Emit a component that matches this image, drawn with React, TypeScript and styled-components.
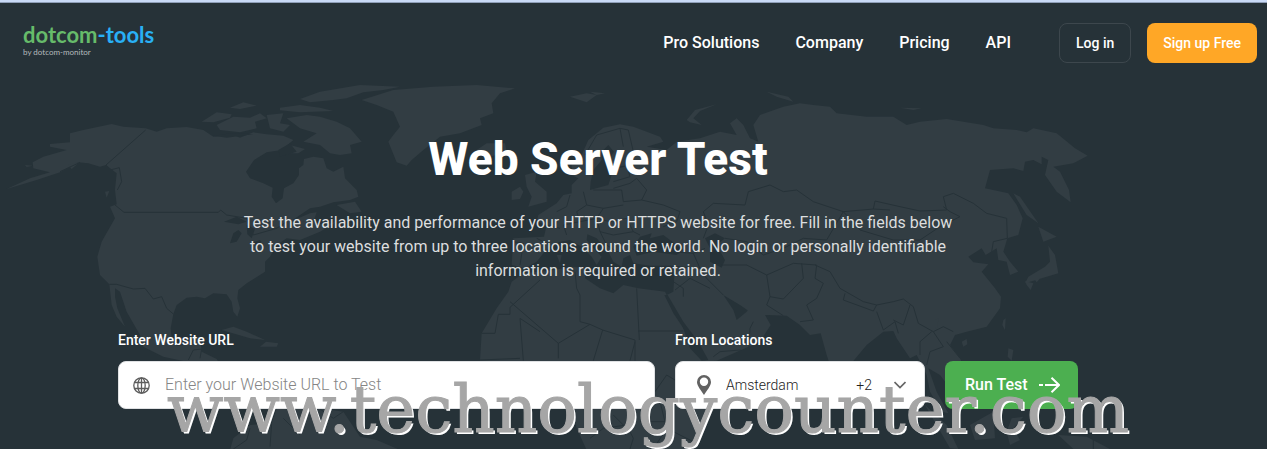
import React from "react";
import styled, { createGlobalStyle } from "styled-components";

const Global = createGlobalStyle`
  *, *::before, *::after { box-sizing: border-box; }
  body { margin: 0; background: #263238; font-family: Roboto, "Liberation Sans", sans-serif; color: #fff; }
`;

const Page = styled.div`
  position: relative;
  min-height: 100vh;
  overflow: hidden;
  background: #263238;
  border-top: 2px solid #c9daf6;
  box-shadow: inset 0 1px 0 #8f9fb8;
`;

const MapArt = styled.svg`
  position: absolute;
  top: -2px;
  left: 0;
  width: 1267px;
  height: 449px;
  fill: #323d43;
`;

const Header = styled.header`
  position: relative;
  display: flex;
  align-items: center;
  justify-content: space-between;
  padding: 21px 10px 0 23px;
`;

const Logo = styled.a`
  display: flex;
  flex-direction: column;
  margin-bottom: 4px;
  color: #66bb6a;
  text-decoration: none;
  font-family: Lato, sans-serif;
  font-size: 22px;
  font-weight: 700;
  line-height: 22px;
`;

const LogoAccent = styled.span`
  color: #29b0f5;
`;

const Tagline = styled.small`
  font-size: 8px;
  font-weight: 400;
  line-height: 12px;
  color: #b4babd;
`;

const Nav = styled.nav`
  display: flex;
  align-items: center;
  gap: 36px;
`;

const NavLink = styled.a`
  color: #fff;
  font-size: 16px;
  font-weight: 500;
  line-height: 24px;
  text-decoration: none;
`;

const Account = styled.div`
  display: flex;
  gap: 16px;
  margin-left: 12px;
`;

const AccountButton = styled.button<{ $filled?: boolean }>`
  height: 40px;
  padding: 0 16px;
  border: ${(p) => (p.$filled ? "0" : "1px solid #3d474d")};
  border-radius: 8px;
  background: ${(p) => (p.$filled ? "#ffa726" : "transparent")};
  color: #fff;
  font: 500 14px/20px Roboto, sans-serif;
  white-space: nowrap;
`;

const Hero = styled.main`
  position: relative;
  display: flex;
  flex-direction: column;
  align-items: center;
  padding: 68px 71px 40px 0;
`;

const Title = styled.h1`
  margin: 0;
  font-size: 46px;
  font-weight: 800;
  line-height: 56px;
`;

const Lead = styled.p`
  max-width: 720px;
  margin: 24px 0 47px;
  color: #dcdedf;
  font-size: 16px;
  font-weight: 400;
  line-height: 24px;
  text-align: center;
`;

const TestForm = styled.form`
  display: flex;
  align-items: flex-end;
  gap: 20px;
  width: 100%;
  max-width: 960px;
`;

const Field = styled.div<{ $width?: number }>`
  flex: ${(p) => (p.$width ? `0 0 ${p.$width}px` : "1 1 0")};
  min-width: 0;
`;

const Label = styled.label`
  display: block;
  margin-bottom: 11px;
  font-size: 14px;
  font-weight: 500;
  line-height: 20px;
`;

const Box = styled.div<{ $pad: number }>`
  display: flex;
  align-items: center;
  gap: 15px;
  height: 48px;
  padding: 0 18px 0 ${(p) => p.$pad}px;
  border: 1px solid #dfe1e3;
  border-radius: 8px;
  background: #fff;
  color: #333;
  font-size: 14px;
  font-weight: 300;
`;

const UrlInput = styled.input`
  flex: 1;
  min-width: 0;
  padding: 0;
  border: 0;
  outline: 0;
  background: transparent;
  font: 300 16px/24px Roboto, sans-serif;
  color: #333;
  &::placeholder { color: #858585; opacity: 1; }
`;

const Location = styled.select`
  flex: 1;
  min-width: 0;
  padding: 0;
  border: 0;
  appearance: none;
  background: transparent;
  color: #222;
  font: 300 14px/20px Roboto, sans-serif;
`;

const Extra = styled.span`
  color: #222;
  margin-right: 7px;
`;

const RunButton = styled.button`
  display: flex;
  align-items: center;
  justify-content: space-between;
  width: 133px;
  height: 48px;
  padding: 0 18px 0 20px;
  border: 0;
  border-radius: 8px;
  background: #4caf50;
  color: #fff;
  font: 500 16px/24px Roboto, sans-serif;
  white-space: nowrap;
`;

const Watermark = styled.div`
  position: absolute;
  top: 370px;
  left: 167px;
  color: #a6a6a6;
  font: 66px/76px "DejaVu Serif", serif;
  -webkit-text-stroke: 1px #a6a6a6;
  text-shadow: 2px 2px 0 #fff;
  white-space: nowrap;
  pointer-events: none;
`;

function WorldMap() {
  return (
    <MapArt viewBox="0 -225 3801 1347" aria-hidden="true">
      <path d="M210,175 250,165 335,147 370,155 437,160 470,170 500,160 560,156 610,165 640,185 700,180 720,188 760,172 800,178 850,182 880,195 845,225 800,232 762,255 738,290 750,310 790,325 818,338 815,365 828,385 848,370 852,340 880,325 897,300 897,280 910,270 912,252 940,245 970,250 980,280 1000,290 1030,275 1035,310 1070,345 1075,365 1050,375 1000,382 960,395 930,400 870,440 930,415 950,412 940,440 975,450 1010,440 960,470 900,495 860,490 830,510 810,545 795,560 795,590 740,625 715,645 712,670 720,700 712,725 700,710 695,680 680,658 640,655 615,670 590,665 560,668 530,690 520,717 512,760 515,790 530,812 560,810 570,790 600,785 605,830 650,852 660,870 560,860 490,845 430,815 420,780 380,710 360,650 345,640 345,665 352,700 375,755 350,725 335,690 328,628 300,600 292,545 305,500 345,430 330,395 350,388 345,345 350,295 318,270 300,275 265,265 235,262 180,292 110,315 20,342 90,310 150,292 100,280 98,262 130,245 200,225 150,215 150,207 210,202Z" />
      <path d="M605,140 650,112 695,118 690,128 640,142ZM650,150 700,125 750,128 780,115 800,130 765,140 770,160 720,172 660,165ZM690,98 730,82 770,92 720,102ZM800,120 850,115 840,145 870,150 850,170 810,160ZM840,98 900,90 960,98 1000,108 900,112 840,106ZM900,72 960,50 1080,30 1200,35 1150,45 1090,52 1040,70 1000,75 930,82ZM860,130 920,120 960,125 1010,140 1050,160 1085,200 1050,210 1055,235 1020,240 990,235 960,210 910,200 950,175 900,160ZM850,235 870,210 915,222 895,235ZM1010,390 1065,380 1085,410 1050,415ZM665,765 700,755 740,770 795,795 750,790ZM798,800 835,805 830,815 780,815ZM315,350 328,348 320,368ZM205,270 240,260 215,282ZM75,270 98,272 80,276ZM80,232 98,235Z" />
      <path d="M1085,75 1180,45 1300,35 1430,30 1545,40 1500,55 1475,85 1480,115 1440,130 1445,150 1380,175 1320,185 1270,225 1235,255 1220,272 1190,262 1165,200 1180,180 1200,155 1180,110 1130,90Z" />
      <path d="M830,1000 815,1045 750,1050 700,1090 690,1125 1200,1125 1130,1095 1080,1085 1030,1010 960,1000Z" />

      <g transform="translate(1200 0)">
        <path d="M340,490 335,570 375,580 410,560 430,535 450,515 480,500 510,495 545,515 575,545 590,570 605,545 580,520 560,495 562,478 590,490 625,530 640,560 665,575 670,550 690,540 700,565 750,572 825,572 820,650 800,660 830,720 880,800 910,860 950,857 1080,800 1112,750 1095,720 1065,705 1060,685 1040,710 1010,735 1000,705 970,660 1020,690 1060,718 1160,722 1200,750 1230,780 1262,775 1280,840 1300,900 1325,940 1350,870 1400,810 1450,770 1480,768 1490,790 1530,850 1550,840 1580,900 1590,950 1625,1010 1645,1015 1610,950 1585,880 1620,900 1650,940 1700,900 1680,850 1650,810 1665,780 1700,770 1760,755 1800,700 1803,665 1785,640 1745,590 1765,568 1720,562 1705,545 1745,520 1757,540 1790,520 1795,555 1820,560 1830,600 1855,590 1830,560 1810,530 1822,490 1855,480 1868,430 1850,390 1825,355 1755,340 1770,285 1840,280 1870,288 1875,260 1900,255 1925,268 1925,245 1945,255 1935,300 1970,350 2012,382 2007,345 1980,290 1960,275 2020,265 2063,242 2025,220 1970,175 1900,160 1880,172 1850,165 1780,160 1750,150 1640,132 1560,140 1520,150 1480,125 1400,125 1310,115 1290,95 1240,90 1200,85 1150,95 1080,120 1060,150 1075,200 1050,190 1030,150 1010,130 990,145 1010,180 960,170 900,190 830,200 800,225 740,215 790,200 780,185 700,155 660,148 610,158 565,195 545,240 515,260 515,300 535,310 515,330 515,355 490,360 470,385 415,420 410,440 440,450 432,485Z" />
        <path d="M370,595 440,588 520,575 555,580 555,610 600,640 640,655 670,630 715,640 795,650 820,700 870,800 920,860 960,885 1010,880 960,980 900,1060 880,1125 560,1125 530,1060 515,1000 430,980 300,990 240,857 245,775 290,700 325,650 335,620Z" />
        <path d="M375,300 410,290 405,320 440,350 440,380 385,395 395,365 380,335ZM335,350 360,335 370,350 360,372 335,375ZM230,225 260,205 315,205 320,230 270,245ZM510,65 560,55 590,60 560,82ZM570,50 615,55 590,60ZM860,135 885,105 950,88 900,108 880,130 905,150 870,142ZM1100,50 1165,65 1180,80 1130,65ZM1500,98 1565,100 1540,105ZM520,585 550,580 545,595ZM470,540 485,540 480,565ZM1840,355 1860,365 1915,445 1880,420ZM1915,455 1970,485 1930,500ZM1945,512 1965,540 1975,595 1930,608 1875,625 1885,605 1935,575 1950,560ZM1875,618 1900,625 1892,645 1880,630ZM1903,612 1922,608 1910,622ZM1605,735 1615,730 1612,765 1605,755Z" />
        <path d="M1810,735 1817,730 1815,765 1807,750ZM1685,800 1700,792 1702,808 1690,815ZM1825,820 1840,825 1835,857 1823,845ZM1575,990 1640,1050 1675,1122 1650,1120ZM1710,1050 1780,1010 1785,1090 1725,1095ZM1820,1070 1835,1030 1870,1025 1840,1060 1860,1095 1830,1110ZM1975,1080 2060,1085 2130,1122 2020,1122Z" />
      </g>

      <g fill="#263238">
        <path d="M672,440 710,425 740,440 715,448ZM690,505 700,475 715,465 725,475 710,500ZM740,450 765,462 755,490 742,478ZM750,505 780,495 785,502 755,512ZM640,182 700,174 760,178 680,188ZM835,225 870,205 890,230 840,245Z" />
        <g transform="translate(1200 0)">
          <path d="M572,320 580,285 605,255 605,230 625,210 642,230 622,260 650,275 690,270 640,285 625,330 570,345ZM700,515 720,485 755,475 750,490 790,480 850,525 830,540 760,530 710,542ZM915,490 945,475 975,490 950,510 975,555 965,578 930,560 930,520ZM793,660 803,660 850,740 895,800 925,855 905,857 870,820 850,760 820,715Z" />
        </g>
      </g>

      <g fill="none" stroke="#263238" strokeWidth="3" strokeLinejoin="round">
        <path d="M437,165 318,270 330,285 358,278 365,320 352,345M345,390 372,412 655,412 662,405 680,420 740,430 760,480 830,460 860,440M328,628 350,628 400,642 435,640 460,672 485,665 500,700 520,717M565,855 580,825 605,822 600,850M815,1045 810,1115M750,1060 740,1095 700,1122M960,1002 1000,1030 1030,1010M850,1030 900,1080M180,290 240,262" />
        <g transform="translate(1200 0)">
          <path d="M555,240 590,180 660,160 685,165 700,230M660,160 670,215M680,270 690,305 640,320M640,340 690,325 710,310 740,345 725,375 670,380 665,345 580,345M510,360 500,395 470,410M550,350 560,390 610,400 670,390M560,390 530,410 540,440 490,450 500,480M540,440 590,430 610,400M590,430 630,440 680,430 700,470 720,480M725,375 790,390 840,410 830,440 790,455M590,430 600,470 640,480 700,470M600,470 620,510 650,530 690,525M340,500 370,505 360,570M410,490 450,510M440,450 480,460M815,530 880,535 900,580 830,575M880,535 915,520M910,490 925,450 910,410 940,385 1035,390 1045,350 1110,330 1150,350 1190,345 1240,380 1330,410 1420,402 1470,405M975,490 1040,500 1090,540 1150,520 1210,490 1280,495 1330,410M1330,410 1380,465 1480,495 1560,495 1620,455 1680,425 1650,410 1630,395M1420,402 1425,378 1500,395 1560,408 1640,405 1630,365 1660,355 1720,385 1760,415 1820,430 1822,490 1780,500 1775,530M965,570 1040,570 1100,600 1180,565 1250,570M1100,600 1110,665 1150,672 1210,610 1205,565M1110,665 1100,690 1150,722M900,580 920,610 970,660M825,645 870,610 930,640M820,620 850,640 850,665M1200,740 1240,735 1220,690 1250,670 1270,625 1245,610 1250,570M1245,570 1290,590 1320,640 1390,680 1430,690 1480,680 1510,672 1540,695 1555,745 1600,770 1630,755 1660,770M1335,655 1330,675 1420,708 1430,690M1430,710 1450,765 1485,740 1495,775M1480,735 1510,750 1530,690M1595,770 1560,800 1560,840M1600,770 1630,815 1590,830 1580,870M1640,800 1680,850M940,845 960,830 1020,825 1045,835M1045,835 1050,760 1060,740" />
          <path d="M330,697 420,615M330,680 475,805 570,748 608,765 705,795 705,857M330,697 330,718 295,718 285,775 245,775M360,730 370,857M360,730 420,770M475,805 475,850M525,590 530,640 540,660 540,740 570,748M710,640 718,795M715,768 850,768M608,765 580,857M705,800 690,857M240,855 360,850M570,1090 610,1060 680,1050 700,1090 690,1122M640,1020 680,1060M780,980 800,1060 880,1100M765,950 800,900 825,915M800,1060 760,1122M720,1040 800,1040M2080,1095 2080,1122" />
        </g>
      </g>
    </MapArt>
  );
}

function GlobeIcon() {
  return (
    <svg width="17" height="17" viewBox="0 0 17 17" fill="none" stroke="#5c5c5c" strokeWidth="1.3" aria-hidden="true">
      <circle cx="8.500" cy="8.500" r="7.700" />
      <ellipse cx="8.500" cy="8.500" rx="3.700" ry="7.700" />
      <path d="M1.500 5.500H15.500M1.500 11.500H15.500M8.500 1V16" />
    </svg>
  );
}

function PinIcon() {
  return (
    <svg width="14" height="20" viewBox="0 0 14 20" aria-hidden="true">
      <path fill="#626262" fillRule="evenodd" d="M7 0a7 7 0 0 1 7 7c0 4-4 8-7 13C4 15 0 11 0 7a7 7 0 0 1 7-7Zm0 2.500a4.200 4.200 0 1 0 0 8.400 4.200 4.200 0 0 0 0-8.400Z" />
    </svg>
  );
}

function ChevronIcon() {
  return (
    <svg width="12" height="8" viewBox="0 0 12 8" fill="none" stroke="#666" strokeWidth="1.700" aria-hidden="true">
      <path d="M0.500 1 6 6.500 11.500 1" />
    </svg>
  );
}

function ArrowIcon() {
  return (
    <svg width="21" height="16" viewBox="0 0 21 16" fill="none" stroke="#fff" strokeWidth="2" aria-hidden="true">
      <path d="M0 8H4M6 8H20M12.500 0.700 20 8 12.500 15.300" />
    </svg>
  );
}

export default function App() {
  return (
    <Page>
      <Global />
      <WorldMap />
      <Header>
        <Logo href="#">
          <span>
            dotcom<LogoAccent>-tools</LogoAccent>
          </span>
          <Tagline>by dotcom-monitor</Tagline>
        </Logo>
        <Nav>
          <NavLink href="#">Pro Solutions</NavLink>
          <NavLink href="#">Company</NavLink>
          <NavLink href="#">Pricing</NavLink>
          <NavLink href="#">API</NavLink>
          <Account>
            <AccountButton type="button">Log in</AccountButton>
            <AccountButton type="button" $filled>
              Sign up Free
            </AccountButton>
          </Account>
        </Nav>
      </Header>
      <Hero>
        <Title>Web Server Test</Title>
        <Lead>
          Test the availability and performance of your HTTP or HTTPS website for free. Fill in the fields below to
          test your website from up to three locations around the world. No login or personally identifiable
          information is required or retained.
        </Lead>
        <TestForm onSubmit={(e) => e.preventDefault()}>
          <Field>
            <Label htmlFor="url">Enter Website URL</Label>
            <Box $pad={14}>
              <GlobeIcon />
              <UrlInput id="url" type="text" placeholder="Enter your Website URL to Test" />
            </Box>
          </Field>
          <Field $width={250}>
            <Label htmlFor="location">From Locations</Label>
            <Box $pad={21}>
              <PinIcon />
              <Location id="location" defaultValue="Amsterdam">
                <option>Amsterdam</option>
              </Location>
              <Extra>+2</Extra>
              <ChevronIcon />
            </Box>
          </Field>
          <RunButton type="submit">
            Run Test
            <ArrowIcon />
          </RunButton>
        </TestForm>
      </Hero>
      <Watermark>www.technologycounter.com</Watermark>
    </Page>
  );
}
